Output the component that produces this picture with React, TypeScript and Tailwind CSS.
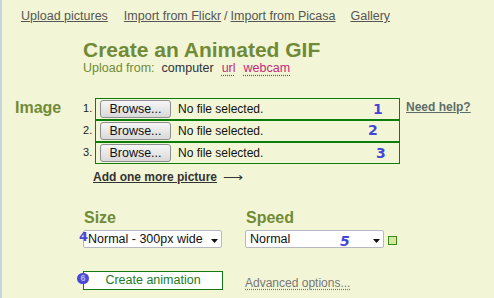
import React from "react";

const olive = "text-[#718a38]";

function BlueNum({ children, className }: { children: React.ReactNode; className: string }) {
  return (
    <span
      className={`absolute font-bold text-[#4646d6] text-[14px] leading-[14px] ${className}`}
      style={{ fontFamily: '"DejaVu Sans", sans-serif' }}
    >
      {children}
    </span>
  );
}

function FileRow({ n, blue, blueClass }: { n: number; blue: string; blueClass: string }) {
  return (
    <div className="flex">
      <div className="w-[12px] text-[11px] leading-[20px] text-[#222]">{n}.</div>
      <div className="relative w-[305px] h-[22px] border border-[#0b7d0b] flex items-center pl-[4px]">
        <div className="w-[71px] h-[18px] rounded-[3px] border border-[#8d8e90] bg-gradient-to-b from-[#f6f6f6] to-[#d9d9d9] flex items-center justify-center text-[12.5px] text-[#111] leading-[16px]">
          Browse...
        </div>
        <span className="ml-[7px] text-[12px] text-[#111]">No file selected.</span>
        <BlueNum className={blueClass}>{blue}</BlueNum>
      </div>
    </div>
  );
}

function Select({ text, children }: { text: string; children?: React.ReactNode }) {
  return (
    <div className="relative w-[139px] h-[18px] bg-white border border-[#b6b9c2] rounded-[2px] flex items-center pl-[4px] text-[12.5px] text-[#111]">
      {text}
      <svg className="absolute left-[127px] top-[8px]" width="8" height="4" viewBox="0 0 8 4">
        <path d="M0 0 H7 L3.5 4 Z" fill="#111" />
      </svg>
      {children}
    </div>
  );
}

export default function App() {
  return (
    <div
      className="w-[494px] h-[298px] bg-[#f3f6d6] border-l-2 border-[#c8d3da] overflow-hidden"
      style={{ fontFamily: '"Liberation Sans", Arial, sans-serif' }}
    >
      {/* nav */}
      <div className="flex pl-[19px] pt-[9px] text-[12.5px] leading-[15px] text-[#555]">
        <span className="underline">Upload pictures</span>
        <span className="ml-[16px] underline">Import from Flickr</span>
        <span className="mx-[3px]">/</span>
        <span className="underline">Import from Picasa</span>
        <span className="ml-[15px] underline">Gallery</span>
      </div>

      {/* title */}
      <div className="ml-[81px] mt-[14px]">
        <h1 className={`text-[21px] font-bold leading-[23px] ${olive}`}>Create an Animated GIF</h1>
        <div className="flex text-[12.5px] leading-[15px]">
          <span className={olive}>Upload from:</span>
          <span className="ml-[7px] text-[#2f2f3a]">computer</span>
          <span className="ml-[8px] text-[#c2287c] underline decoration-dotted underline-offset-[3px]">url</span>
          <span className="ml-[8px] text-[#c2287c] underline decoration-dotted underline-offset-[3px]">webcam</span>
        </div>
      </div>

      {/* image */}
      <div className="flex mt-[22px]">
        <div className={`w-[81px] pl-[13px] pt-[1px] text-[16px] font-bold leading-[18px] ${olive}`}>Image</div>
        <div className="flex flex-col">
          <div className="flex items-start">
            <div className="flex flex-col">
              <FileRow n={1} blue="1" blueClass="left-[277px] top-[3px]" />
              <FileRow n={2} blue="2" blueClass="left-[272px] top-[2px]" />
              <FileRow n={3} blue="3" blueClass="left-[280px] top-[3px]" />
            </div>
            <span className="ml-[6px] mt-[2px] text-[12px] font-bold leading-[15px] text-[#5e6c6c] underline">Need help?</span>
          </div>
          <div className="flex items-center ml-[10px] mt-[6px] text-[12px] font-bold leading-[14px] text-[#333]">
            <span className="underline">Add one more picture</span>
            <span className="ml-[6px] text-[14px] font-normal">⟶</span>
          </div>
        </div>
      </div>

      {/* size / speed */}
      <div className="flex ml-[81px] mt-[25px]">
        <div className="w-[139px]">
          <div className={`pl-[1px] text-[16px] font-bold leading-[18px] ${olive}`}>Size</div>
          <div className="relative mt-[3px]">
            <Select text="Normal - 300px wide" />
            <span
              className="absolute left-[-4px] top-[0px] text-[13px] leading-[13px] font-bold text-[#4646d6]"
              style={{ fontFamily: '"DejaVu Sans", sans-serif' }}
            >
              4
            </span>
          </div>
        </div>
        <div className="ml-[23px]">
          <div className={`pl-[1px] text-[16px] font-bold leading-[18px] ${olive}`}>Speed</div>
          <div className="flex items-center mt-[3px]">
            <Select text="Normal">
              <span
                className="absolute left-[94px] top-[3px] text-[14px] leading-[14px] font-bold italic text-[#4646d6]"
                style={{ fontFamily: '"DejaVu Sans", sans-serif' }}
              >
                5
              </span>
            </Select>
            <div className="ml-[4px] mt-[2px] w-[9px] h-[9px] border border-[#3a8a1a] bg-[#d4e8a0]" />
          </div>
        </div>
      </div>

      {/* create */}
      <div className="flex items-center ml-[81px] mt-[23px]">
        <div className="relative w-[140px] h-[19px] bg-white border border-[#137a13] flex items-center justify-center text-[12.5px] text-[#1d7a1d]">
          Create animation
          <span className="absolute left-[-7px] top-[1px] w-[12px] h-[11px] rounded-full bg-[#4a4ad4] flex items-center justify-center text-[9px] leading-[9px] font-bold text-[#b4b8ff]">
            6
          </span>
        </div>
        <span className="ml-[22px] mt-[4px] text-[12px] leading-[14px] text-[#777] underline decoration-dotted underline-offset-[2px]">
          Advanced options...
        </span>
      </div>
    </div>
  );
}
